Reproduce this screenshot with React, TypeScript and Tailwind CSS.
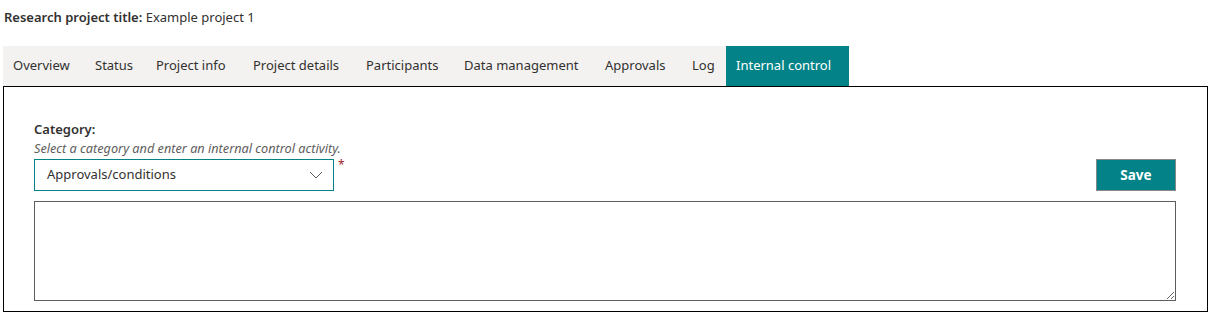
import React from "react";

const tabs: [string, number][] = [
  ["Overview", 82],
  ["Status", 61],
  ["Project info", 97],
  ["Project details", 113],
  ["Participants", 98],
  ["Data management", 141],
  ["Approvals", 87],
  ["Log", 44],
];

export default function App() {
  return (
    <div
      className="w-[1210px] h-[328px] bg-white text-[#323130]"
      style={{ fontFamily: '"Noto Sans", "Open Sans", sans-serif' }}
    >
      <div className="pl-[4px] pt-[7px] h-[46px] text-[13px] leading-[20px]">
        <span className="font-semibold">Research project title:</span> Example project 1
      </div>
      <div className="ml-[3px] flex h-[40px]">
        <div className="flex bg-[#f3f2f1]">
          {tabs.map(([t, w]) => (
            <div
              key={t}
              className="flex items-center pl-[10px] text-[13px] text-[#323130] whitespace-nowrap"
              style={{ width: w }}
            >
              {t}
            </div>
          ))}
          <div className="flex items-center pl-[10px] w-[123px] bg-[#038387] text-white text-[13px] whitespace-nowrap">
            Internal control
          </div>
        </div>
      </div>
      <div className="ml-[3px] mr-[2px] h-[226px] border border-black pl-[30px] pr-[31px] pt-[33px]">
        <div className="text-[13px] font-semibold leading-[18px]">Category:</div>
        <div className="text-[12.7px] italic text-[#605e5c] leading-[18px] mt-[1px] mb-[2px]">
          Select a category and enter an internal control activity.
        </div>
        <div className="flex items-start">
          <div className="w-[300px] h-[32px] border border-[#038387] flex items-center justify-between pl-[12px] pr-[10px]">
            <span className="text-[13px]">Approvals/conditions</span>
            <svg width="14" height="8" viewBox="0 0 14 8" fill="none">
              <path d="M1 1l6 6 6-6" stroke="#605e5c" strokeWidth="1" />
            </svg>
          </div>
          <span className="text-[#a4262c] text-[12px] leading-[12px] ml-[4px] mt-[0px]">*</span>
          <div className="flex-1" />
          <button className="w-[80px] h-[32px] bg-[#038387] border border-[#8a8886] text-white font-bold text-[13.5px]">
            Save
          </button>
        </div>
        <textarea className="mt-[10px] block w-full h-[100px] border border-[#605e5c] outline-none resize-y" />
      </div>
    </div>
  );
}
